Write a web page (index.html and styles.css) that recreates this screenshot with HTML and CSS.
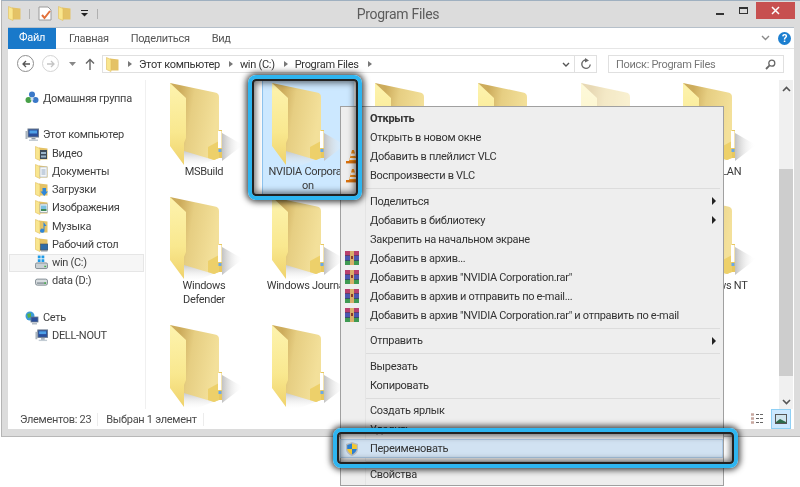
FILE: index.html
```html
<!DOCTYPE html>
<html lang="ru">
<head>
  <meta charset="UTF-8" />
  <title>Program Files</title>
  <link rel="stylesheet" href="styles.css">
</head>
<body>

  <svg class="defs" width="0" height="0">
    <defs>
      <linearGradient id="g-back" x1="0" y1="0" x2="1" y2="0.25">
        <stop offset="0.22" stop-color="#cdac5c" />
        <stop offset="0.5" stop-color="#e6ce82" />
        <stop offset="1" stop-color="#f3e09a" />
      </linearGradient>
      <linearGradient id="g-flap" x1="0" y1="0" x2="0" y2="1">
        <stop offset="0" stop-color="#fdf3ae" />
        <stop offset="0.6" stop-color="#f9e88f" />
        <stop offset="1" stop-color="#efd26c" />
      </linearGradient>
      <linearGradient id="g-shadow" x1="0" y1="0" x2="1" y2="0">
        <stop offset="0" stop-color="#c2c2c2" />
        <stop offset="1" stop-color="#ffffff" stop-opacity="0" />
      </linearGradient>
      <linearGradient id="g-under" x1="0" y1="0" x2="0" y2="1">
        <stop offset="0" stop-color="#bcbcbc" />
        <stop offset="1" stop-color="#ffffff" stop-opacity="0" />
      </linearGradient>
      <symbol id="folder" viewBox="0 0 76 85">
        <polygon points="52,50 73,62 52,78" fill="url(#g-shadow)" />
        <polygon points="14,66 46,76 30,82 14,85" fill="url(#g-under)" />
        <path d="M0 0 L45 9.4 Q49 10 49 14 L49 75 L44 77 L14 68 Z" fill="url(#g-back)" />
        <polygon points="38,64 49,58 49,75 44,77 38,75" fill="#edd06a" />
        <rect x="49" y="47" width="3" height="28" fill="#e8c860" />
        <rect x="48" y="48" width="3.5" height="17" fill="#fff" />
        <rect x="48.5" y="66" width="3" height="3" fill="#6aa8e8" />
        <polygon points="0,0 16,15 16,55 14,60 14,82 0,63" fill="url(#g-flap)" />
      </symbol>
      <symbol id="small-folder" viewBox="0 0 13 15">
        <polygon points="4,1.5 12.5,2.5 12.5,13.5 4,13.5" fill="#e4c266" />
        <polygon points="0.5,0.5 5,2.5 5,14.5 0.5,12.5" fill="#f9e68f" stroke="#e0bd5c" stroke-width="0.6" />
      </symbol>
      <symbol id="rar" viewBox="0 0 14 14">
        <rect width="14" height="4.6" fill="#b8406e" />
        <rect y="4.6" width="14" height="4.6" fill="#4c56b0" />
        <rect y="9.2" width="14" height="4.8" fill="#3f9a52" />
        <rect y="4" width="14" height="0.8" fill="#55305e" />
        <rect y="9" width="14" height="0.8" fill="#2e3a6a" />
        <rect x="5" width="4" height="14" fill="#d9ae6a" />
        <rect x="6" y="5" width="2" height="3" fill="#8a3a2a" />
      </symbol>
      <symbol id="vlc" viewBox="0 0 14 14">
        <polygon points="7,0 9,0 12,11 4,11" fill="#ef8a12" />
        <polygon points="6,3.5 10,3.5 10.6,6 5.4,6" fill="#f4f0e8" />
        <polygon points="5,8 11,8 11.6,10 4.4,10" fill="#f4f0e8" />
        <rect x="1" y="11" width="13" height="2.4" fill="#d9700c" />
      </symbol>
      <symbol id="monitor" viewBox="0 0 14 14">
        <rect x="3" y="1" width="10.5" height="8" fill="#2a4f9c" stroke="#6b7a8c" />
        <rect x="4.5" y="2.5" width="7.5" height="3" fill="#4da0e8" />
        <rect x="0.5" y="3" width="2" height="8" fill="#aab4bd" />
        <rect x="6.5" y="10" width="4" height="1.5" fill="#8b98a6" />
        <rect x="4" y="11.5" width="9" height="1.5" fill="#c3ccd4" />
      </symbol>
      <symbol id="drive" viewBox="0 0 14 15">
        <rect x="0.5" y="6" width="13" height="6.5" rx="2" fill="#d8dde0" stroke="#7d8890" />
        <rect x="2" y="9.5" width="10" height="1.6" fill="#8b959c" />
        <rect x="10" y="9.5" width="2" height="1.6" fill="#46b04a" />
      </symbol>
    </defs>
  </svg>

  <div class="window">
    <header class="titlebar">
      <div class="quick">
        <svg class="ico-13"><use href="#small-folder" /></svg>
        <span class="qsep"></span>
        <svg class="ico-doc" viewBox="0 0 14 15">
          <path d="M1 1 H10 L13 4 V14 H1 Z" fill="#fff" stroke="#9a9a9a" />
          <path d="M4 9 L6.5 12 L12 5" fill="none" stroke="#e2703a" stroke-width="2" />
        </svg>
        <svg class="ico-13"><use href="#small-folder" /></svg>
        <svg class="ico-drop" viewBox="0 0 8 7">
          <rect y="0" width="7" height="1" fill="#222" />
          <polygon points="0,3 7,3 3.5,6.5" fill="#222" />
        </svg>
        <span class="qsep"></span>
      </div>
      <div class="title">Program Files</div>
      <div class="winbtns">
        <span class="btn-min"></span>
        <span class="btn-max"></span>
        <span class="btn-close">
          <svg width="9" height="9" viewBox="0 0 9 9"><path d="M1 1 L8 8 M8 1 L1 8" stroke="#fff" stroke-width="1.5" /></svg>
        </span>
      </div>
    </header>

    <div class="inner">
      <div class="tabs">
        <div class="tab-file">Файл</div>
        <div class="tab">Главная</div>
        <div class="tab">Поделиться</div>
        <div class="tab">Вид</div>
        <div class="tabs-right">
          <svg width="9" height="6" viewBox="0 0 9 6"><path d="M1 1 L4.5 4.5 L8 1" fill="none" stroke="#8a8a8a" stroke-width="1.4" /></svg>
          <span class="help">?</span>
        </div>
      </div>

      <div class="addressbar">
        <span class="nav-circle"><svg width="10" height="10" viewBox="0 0 10 10"><path d="M9 5 H2 M5 2 L2 5 L5 8" fill="none" stroke="#555" stroke-width="1.3" /></svg></span>
        <span class="nav-circle nav-off"><svg width="10" height="10" viewBox="0 0 10 10"><path d="M1 5 H8 M5 2 L8 5 L5 8" fill="none" stroke="#c4c4c4" stroke-width="1.3" /></svg></span>
        <svg class="nav-drop" width="7" height="4" viewBox="0 0 7 4"><polygon points="0,0 7,0 3.5,4" fill="#888" /></svg>
        <svg class="nav-up" width="10" height="12" viewBox="0 0 10 12"><path d="M5 12 V2 M1 5.5 L5 1.5 L9 5.5" fill="none" stroke="#666" stroke-width="1.4" /></svg>
        <div class="path-box">
          <svg class="ico-13"><use href="#small-folder" /></svg>
          <span class="crumb-arrow"></span>
          <span class="crumb">Этот компьютер</span>
          <span class="crumb-arrow"></span>
          <span class="crumb">win (C:)</span>
          <span class="crumb-arrow"></span>
          <span class="crumb">Program Files</span>
          <span class="crumb-arrow"></span>
          <svg class="path-chevron" width="8" height="5" viewBox="0 0 8 5"><path d="M1 1 L4 4 L7 1" fill="none" stroke="#555" stroke-width="1.4" /></svg>
          <span class="path-refresh">
            <svg width="12" height="12" viewBox="0 0 12 12"><path d="M6 2 A4.2 4.2 0 1 0 10.2 6.5" fill="none" stroke="#666" stroke-width="1.4" /><polygon points="5,0 9,2.5 5,4.5" fill="#666" /></svg>
          </span>
        </div>
        <div class="search-box">
          <span>Поиск: Program Files</span>
          <svg width="11" height="11" viewBox="0 0 11 11"><circle cx="6.8" cy="4.2" r="3" fill="none" stroke="#666" stroke-width="1.3" /><path d="M4.6 6.4 L1 10" stroke="#666" stroke-width="1.8" /></svg>
        </div>
      </div>

      <div class="main">
        <nav class="navpane">
          <div class="nav-row top">
            <svg class="ico-14" viewBox="0 0 14 14"><circle cx="7" cy="3.5" r="3" fill="#3a78c8" /><circle cx="3.5" cy="9" r="3" fill="#48a048" /><circle cx="10.5" cy="9" r="3" fill="#3a78c8" /><circle cx="7" cy="8" r="1.6" fill="#cfe0f0" /></svg>
            Домашняя группа
          </div>
          <div class="nav-row group">
            <svg class="ico-14"><use href="#monitor" /></svg>
            Этот компьютер
          </div>
          <div class="nav-row sub">
            <svg class="ico-13" viewBox="0 0 13 15"><use href="#small-folder" width="13" height="15" /><rect x="5" y="4" width="7" height="9" fill="#3c4a58" /><rect x="6" y="6" width="5" height="2" fill="#9ab4c8" /><rect x="6" y="9.5" width="5" height="2" fill="#9ab4c8" /></svg>Видео
          </div>
          <div class="nav-row sub">
            <svg class="ico-13" viewBox="0 0 13 15"><use href="#small-folder" width="13" height="15" /><rect x="5" y="3" width="7" height="10" fill="#f4f6f8" stroke="#a8b4c0" stroke-width="0.6" /><path d="M6.5 6 H10.5 M6.5 8 H10.5 M6.5 10 H10.5" stroke="#7f9ab8" stroke-width="0.8" /></svg>Документы
          </div>
          <div class="nav-row sub">
            <svg class="ico-13" viewBox="0 0 13 15"><use href="#small-folder" width="13" height="15" /><path d="M7.5 6 H11 V9.5 H13 L9.2 14 L5.5 9.5 H7.5 Z" fill="#2f86d8" /></svg>Загрузки
          </div>
          <div class="nav-row sub">
            <svg class="ico-13" viewBox="0 0 13 15"><use href="#small-folder" width="13" height="15" /><rect x="5" y="4" width="7.5" height="8.5" fill="#f0f4f6" stroke="#8a9aa8" stroke-width="0.6" /><rect x="6" y="5.5" width="5.5" height="3.5" fill="#7ac0e0" /><rect x="6" y="9" width="5.5" height="2" fill="#3f8a58" /></svg>Изображения
          </div>
          <div class="nav-row sub">
            <svg class="ico-13" viewBox="0 0 13 15"><use href="#small-folder" width="13" height="15" /><path d="M8.5 3 L11.5 7 L9.5 7 L9.5 11.5 A2.2 2 0 1 1 8.5 10 Z" fill="#2f86d8" /></svg>Музыка
          </div>
          <div class="nav-row sub">
            <svg class="ico-13" viewBox="0 0 13 15"><use href="#small-folder" width="13" height="15" /><rect x="5.5" y="7" width="7.5" height="6" fill="#2f6ca8" stroke="#4a5560" stroke-width="0.6" /><rect x="6" y="13" width="6.5" height="1.5" fill="#8a96a2" /></svg>Рабочий стол
          </div>
          <div class="nav-row sub current">
            <svg class="ico-13" viewBox="0 0 14 15"><rect x="3" y="0" width="3" height="3" fill="#1c9be8" /><rect x="7" y="0" width="3" height="3" fill="#1c9be8" /><rect x="3" y="4" width="3" height="3" fill="#1c9be8" /><rect x="7" y="4" width="3" height="3" fill="#1c9be8" /><rect x="0.5" y="8" width="13" height="6" rx="1.5" fill="#c9d0d4" stroke="#7d8890" /><rect x="10" y="11" width="2" height="1.5" fill="#46b04a" /></svg>win (C:)
          </div>
          <div class="nav-row sub">
            <svg class="ico-13"><use href="#drive" /></svg>data (D:)
          </div>
          <div class="nav-row group">
            <svg class="ico-14" viewBox="0 0 14 14"><circle cx="5" cy="5" r="4.5" fill="#3a9ad8" /><path d="M2 3 L6 2 L6 6 L3 7 Z" fill="#58b048" /><rect x="6" y="6" width="7" height="5" fill="#2a4f9c" stroke="#6b7a8c" stroke-width="0.8" /><rect x="7" y="12" width="5" height="1.5" fill="#b4bdc6" /></svg>
            Сеть
          </div>
          <div class="nav-row sub">
            <svg class="ico-13"><use href="#monitor" /></svg>DELL-NOUT
          </div>
        </nav>

        <section class="files">
          <div class="file-grid">
            <div class="file"><svg class="folder"><use href="#folder" /></svg><div class="file-name">MSBuild</div></div>
            <div class="file selected"><svg class="folder"><use href="#folder" /></svg><div class="file-name">NVIDIA Corporati<br>on</div></div>
            <div class="file"><svg class="folder"><use href="#folder" /></svg></div>
            <div class="file"><svg class="folder"><use href="#folder" /></svg></div>
            <div class="file cut"><svg class="folder"><use href="#folder" /></svg></div>
            <div class="file"><svg class="folder"><use href="#folder" /></svg><div class="file-name">VideoLAN</div></div>
            <div class="file"><svg class="folder"><use href="#folder" /></svg><div class="file-name">Windows<br>Defender</div></div>
            <div class="file"><svg class="folder"><use href="#folder" /></svg><div class="file-name">Windows Journal</div></div>
            <div class="file"><svg class="folder"><use href="#folder" /></svg></div>
            <div class="file"><svg class="folder"><use href="#folder" /></svg></div>
            <div class="file"><svg class="folder"><use href="#folder" /></svg></div>
            <div class="file"><svg class="folder"><use href="#folder" /></svg><div class="file-name">Windows NT</div></div>
            <div class="file"><svg class="folder"><use href="#folder" /></svg></div>
            <div class="file"><svg class="folder"><use href="#folder" /></svg></div>
          </div>
        </section>

        <div class="scrollbar">
          <svg width="9" height="6" viewBox="0 0 9 6"><path d="M1 5 L4.5 1.5 L8 5" fill="none" stroke="#555" stroke-width="1.6" /></svg>
          <div class="thumb"></div>
          <svg width="9" height="6" viewBox="0 0 9 6"><path d="M1 1 L4.5 4.5 L8 1" fill="none" stroke="#555" stroke-width="1.6" /></svg>
        </div>
      </div>

      <footer class="status">
        <span class="status-cell">Элементов: 23</span>
        <span class="status-cell">Выбран 1 элемент</span>
        <div class="view-btns">
          <span class="view-btn">
            <svg width="14" height="12" viewBox="0 0 14 12"><path d="M0 1.5 H3 M0 5.5 H3 M0 9.5 H3" stroke="#c8a8a0" stroke-width="2.4" /><path d="M5 1.5 H13 M5 5.5 H13 M5 9.5 H13" stroke="#666" stroke-width="1" stroke-dasharray="3 1" /></svg>
          </span>
          <span class="view-btn active">
            <svg width="12" height="10" viewBox="0 0 12 10"><rect x="0.5" y="0.5" width="11" height="9" fill="#cfe4ee" stroke="#555" /><path d="M1 8 L5 5 L11 8 V9 H1 Z" fill="#2c6a4a" /></svg>
          </span>
        </div>
      </footer>
    </div>
  </div>

  <ul class="context-menu">
    <li class="menu-item default"><span class="menu-icon"></span>Открыть</li>
    <li class="menu-item"><span class="menu-icon"></span>Открыть в новом окне</li>
    <li class="menu-item"><span class="menu-icon"><svg class="ico-14"><use href="#vlc" /></svg></span>Добавить в плейлист VLC</li>
    <li class="menu-item"><span class="menu-icon"><svg class="ico-14"><use href="#vlc" /></svg></span>Воспроизвести в VLC</li>
    <li class="menu-sep"></li>
    <li class="menu-item"><span class="menu-icon"></span>Поделиться<span class="submenu"></span></li>
    <li class="menu-item"><span class="menu-icon"></span>Добавить в библиотеку<span class="submenu"></span></li>
    <li class="menu-item"><span class="menu-icon"></span>Закрепить на начальном экране</li>
    <li class="menu-item"><span class="menu-icon"><svg class="ico-14"><use href="#rar" /></svg></span>Добавить в архив...</li>
    <li class="menu-item"><span class="menu-icon"><svg class="ico-14"><use href="#rar" /></svg></span>Добавить в архив "NVIDIA Corporation.rar"</li>
    <li class="menu-item"><span class="menu-icon"><svg class="ico-14"><use href="#rar" /></svg></span>Добавить в архив и отправить по e-mail...</li>
    <li class="menu-item"><span class="menu-icon"><svg class="ico-14"><use href="#rar" /></svg></span>Добавить в архив "NVIDIA Corporation.rar" и отправить по e-mail</li>
    <li class="menu-sep"></li>
    <li class="menu-item"><span class="menu-icon"></span>Отправить<span class="submenu"></span></li>
    <li class="menu-sep"></li>
    <li class="menu-item"><span class="menu-icon"></span>Вырезать</li>
    <li class="menu-item"><span class="menu-icon"></span>Копировать</li>
    <li class="menu-sep"></li>
    <li class="menu-item"><span class="menu-icon"></span>Создать ярлык</li>
    <li class="menu-item"><span class="menu-icon"></span>Удалить</li>
    <li class="menu-item active">
      <span class="menu-icon">
        <svg class="ico-14" viewBox="0 0 14 14">
          <path d="M7 0 L13 2 V7 C13 10.5 10 13 7 14 C4 13 1 10.5 1 7 V2 Z" fill="#b8bcc0" />
          <path d="M7 1.5 V7 H2.2 V3 Z" fill="#2d7fd0" />
          <path d="M7 1.5 L11.8 3 V7 H7 Z" fill="#f2c832" />
          <path d="M2.2 7 H7 V12.4 C4.6 11.4 2.6 9.6 2.2 7 Z" fill="#f2c832" />
          <path d="M7 7 H11.8 C11.4 9.6 9.4 11.4 7 12.4 Z" fill="#2d7fd0" />
        </svg>
      </span>Переименовать
    </li>
    <li class="menu-sep"></li>
    <li class="menu-item"><span class="menu-icon"></span>Свойства</li>
  </ul>

  <div class="callout callout-folder"></div>
  <div class="callout callout-rename"></div>

</body>
</html>
```

FILE: styles.css
```css
* {
  box-sizing: border-box;
}

html,
body {
  height: 487px;
  margin: 0;
  overflow: hidden;
}

body {
  position: relative;
  background-color: #fff;
  font-family: Roboto, "Noto Sans", sans-serif;
  font-size: 11px;
  letter-spacing: -0.3px;
  color: #3a3a3a;
  white-space: nowrap;
}

.defs {
  position: absolute;
}

.ico-13 {
  display: block;
  width: 13px;
  height: 15px;
  flex: none;
}

.ico-14 {
  display: block;
  width: 14px;
  height: 14px;
  flex: none;
}

/* window frame */
.window {
  width: 799px;
  height: 437px;
  margin-left: 1px;
  padding: 0 6px 7px 6px;
  display: flex;
  flex-direction: column;
  background-color: #dcdcdc;
  border-top: 1px solid #9fb0c0;
  border-left: 1px solid #b4b4b4;
  border-bottom: 1px solid #b8b8b8;
  filter: blur(0.3px);
}

.titlebar {
  height: 26px;
  flex: none;
  display: flex;
  align-items: flex-start;
  position: relative;
}

.quick {
  display: flex;
  align-items: center;
  gap: 6px;
  padding: 5px 0 0 0;
}

.qsep {
  width: 1px;
  height: 10px;
  margin: 0 2px;
  background-color: #b0b0b0;
}

.ico-doc {
  width: 14px;
  height: 15px;
}

.ico-drop {
  width: 8px;
  height: 7px;
  margin-left: 4px;
}

.title {
  position: absolute;
  left: 0;
  right: 0;
  top: 0;
  text-align: center;
  font-size: 14px;
  line-height: 27px;
  color: #5c5c5c;
  padding-right: 6px;
}

.winbtns {
  margin-left: auto;
  display: flex;
  align-items: flex-start;
}

.btn-min {
  width: 8px;
  height: 2px;
  margin: 12px 15px 0 0;
  background-color: #333;
}

.btn-max {
  width: 9px;
  height: 7px;
  margin: 6px 8px 0 0;
  border: 1px solid #333;
  border-top-width: 2px;
}

.btn-close {
  width: 39px;
  height: 17px;
  margin-top: 1px;
  margin-right: -1px;
  display: flex;
  align-items: center;
  justify-content: center;
  background-color: #c75050;
}

.inner {
  flex: 1;
  min-height: 0;
  display: flex;
  flex-direction: column;
  background-color: #fff;
  border-top: 1px solid #b6c0ca;
}

/* ribbon tabs */
.tabs {
  height: 21px;
  flex: none;
  display: flex;
  align-items: center;
  border-bottom: 1px solid #e6e6e6;
}

.tab-file {
  width: 48px;
  height: 21px;
  margin-right: 2px;
  line-height: 20px;
  text-align: center;
  color: #fff;
  background-color: #1979ca;
}

.tab {
  margin: 0 11px;
  color: #555;
}

.tabs-right {
  margin-left: auto;
  display: flex;
  align-items: center;
  gap: 8px;
  padding-right: 3px;
}

.help {
  width: 13px;
  height: 13px;
  border-radius: 50%;
  background-color: #1c7fd0;
  color: #fff;
  font-size: 11px;
  font-weight: bold;
  line-height: 13px;
  text-align: center;
}

/* address row */
.addressbar {
  height: 31px;
  flex: none;
  display: flex;
  align-items: flex-start;
  padding: 6px 10px 0 9px;
}

.nav-circle {
  width: 17px;
  height: 17px;
  margin-right: 8px;
  display: flex;
  align-items: center;
  justify-content: center;
  border: 1.5px solid #8f8f8f;
  border-radius: 50%;
}

.nav-off {
  border-color: #d4d4d4;
}

.nav-drop {
  margin: 7px 0 0 2px;
}

.nav-up {
  margin: 3px 7px 0 9px;
}

.path-box {
  flex: 1;
  height: 18px;
  display: flex;
  align-items: center;
  padding-left: 3px;
  border: 1px solid #e0e0e0;
}

.crumb {
  color: #333;
}

.crumb-arrow {
  width: 0;
  height: 0;
  margin: 0 7px 0 9px;
  border-left: 4px solid #777;
  border-top: 3px solid transparent;
  border-bottom: 3px solid transparent;
}

.path-chevron {
  margin-left: auto;
  margin-right: 4px;
}

.path-refresh {
  width: 22px;
  height: 16px;
  display: flex;
  align-items: center;
  justify-content: center;
  border-left: 1px solid #e0e0e0;
}

.search-box {
  width: 176px;
  height: 18px;
  margin-left: 11px;
  padding: 0 7px;
  display: flex;
  align-items: center;
  justify-content: space-between;
  color: #777;
  border: 1px solid #e0e0e0;
}

/* middle */
.main {
  flex: 1;
  min-height: 0;
  display: flex;
}

.navpane {
  width: 138px;
  flex: none;
  padding: 9px 1px 0 0;
  border-right: 1px solid #f0f0f0;
}

.nav-row {
  height: 18.25px;
  display: flex;
  align-items: center;
  gap: 4px;
  padding-left: 17px;
  color: #3f3f3f;
}

.group {
  margin-top: 18.5px;
}

.sub {
  padding-left: 27px;
}

.current {
  margin-left: 1px;
  padding-left: 26px;
  background-color: #f6f6f6;
  outline: 1px solid #e6e6e6;
  outline-offset: -1px;
}

.files {
  flex: 1;
  min-width: 0;
  overflow: hidden;
  padding-left: 13px;
}

.file-grid {
  display: grid;
  grid-template-columns: repeat(6, 102.8px);
  grid-template-rows: 114px 128px 105px;
}

.file {
  width: 92px;
  height: 116px;
  padding-top: 3px;
}

.folder {
  display: block;
  width: 76px;
  height: 85px;
  margin: 0 0 -3px 10.5px;
  overflow: visible;
}

.file-name {
  width: 90px;
  line-height: 14px;
  text-align: center;
  color: #3a3a3a;
}

.selected {
  background-color: #cce8ff;
  border-left: 1px solid #8fc4ef;
}

.selected .folder {
  margin-left: 9.5px;
}

.cut .folder {
  opacity: 0.45;
}

.scrollbar {
  width: 14px;
  flex: none;
  margin-right: 1px;
  display: flex;
  flex-direction: column;
  align-items: center;
  padding: 6px 0 4px;
  background-color: #f0f0f0;
}

.thumb {
  width: 100%;
  height: 207px;
  margin: 77px 0 23px;
  background-color: #cdcdcd;
}

/* status bar */
.status {
  height: 20px;
  flex: none;
  display: flex;
  align-items: center;
  padding-left: 12px;
  color: #4a4a4a;
}

.status-cell {
  padding-right: 6px;
  margin-right: 8px;
  border-right: 1px solid #ececec;
}

.view-btns {
  margin-left: auto;
  margin-right: 3px;
  display: flex;
  align-items: center;
  gap: 3px;
}

.view-btn {
  width: 20px;
  height: 20px;
  display: flex;
  align-items: center;
  justify-content: center;
}

.view-btn.active {
  background-color: #cce8ff;
  border: 1px solid #8fd0f5;
}

/* context menu */
.context-menu {
  position: absolute;
  left: 340px;
  top: 106px;
  width: 384px;
  height: 380px;
  margin: 0;
  padding: 2px 0 0;
  list-style: none;
  background-color: #eeeeee;
  border: 1px solid #a0a0a0;
  color: #333;
  filter: blur(0.3px);
}

.context-menu::before {
  content: "";
  position: absolute;
  left: 24px;
  top: 0;
  bottom: 0;
  width: 1px;
  background-color: #e4e4e4;
}

.menu-item {
  position: relative;
  height: 19px;
  display: flex;
  align-items: center;
  padding-left: 4px;
}

.menu-item.default {
  font-weight: bold;
}

.menu-item.active {
  margin-left: -1px;
  background-color: #d1e2f2;
  border: 1px solid #aecbe8;
}

.menu-icon {
  width: 14px;
  height: 14px;
  margin-right: 11px;
  flex: none;
}

.menu-sep {
  height: 1px;
  margin: 3px 3px 2.6px 25px;
  background-color: #dcdcdc;
}

.submenu {
  width: 0;
  height: 0;
  margin-left: auto;
  margin-right: 7px;
  border-left: 4px solid #222;
  border-top: 4px solid transparent;
  border-bottom: 4px solid transparent;
}

/* highlight frames drawn over the screenshot */
.callout {
  position: absolute;
  border: 4px solid #2eb5f0;
  border-radius: 8px;
  box-shadow: 0 0 6px 2px rgba(0, 0, 0, 0.75), inset 0 0 0 2px #222, inset 0 0 6px 4px rgba(0, 0, 0, 0.55);
}

.callout-folder {
  left: 248px;
  top: 75px;
  width: 114px;
  height: 125px;
}

.callout-rename {
  left: 333px;
  top: 428px;
  width: 405px;
  height: 40px;
}
```
